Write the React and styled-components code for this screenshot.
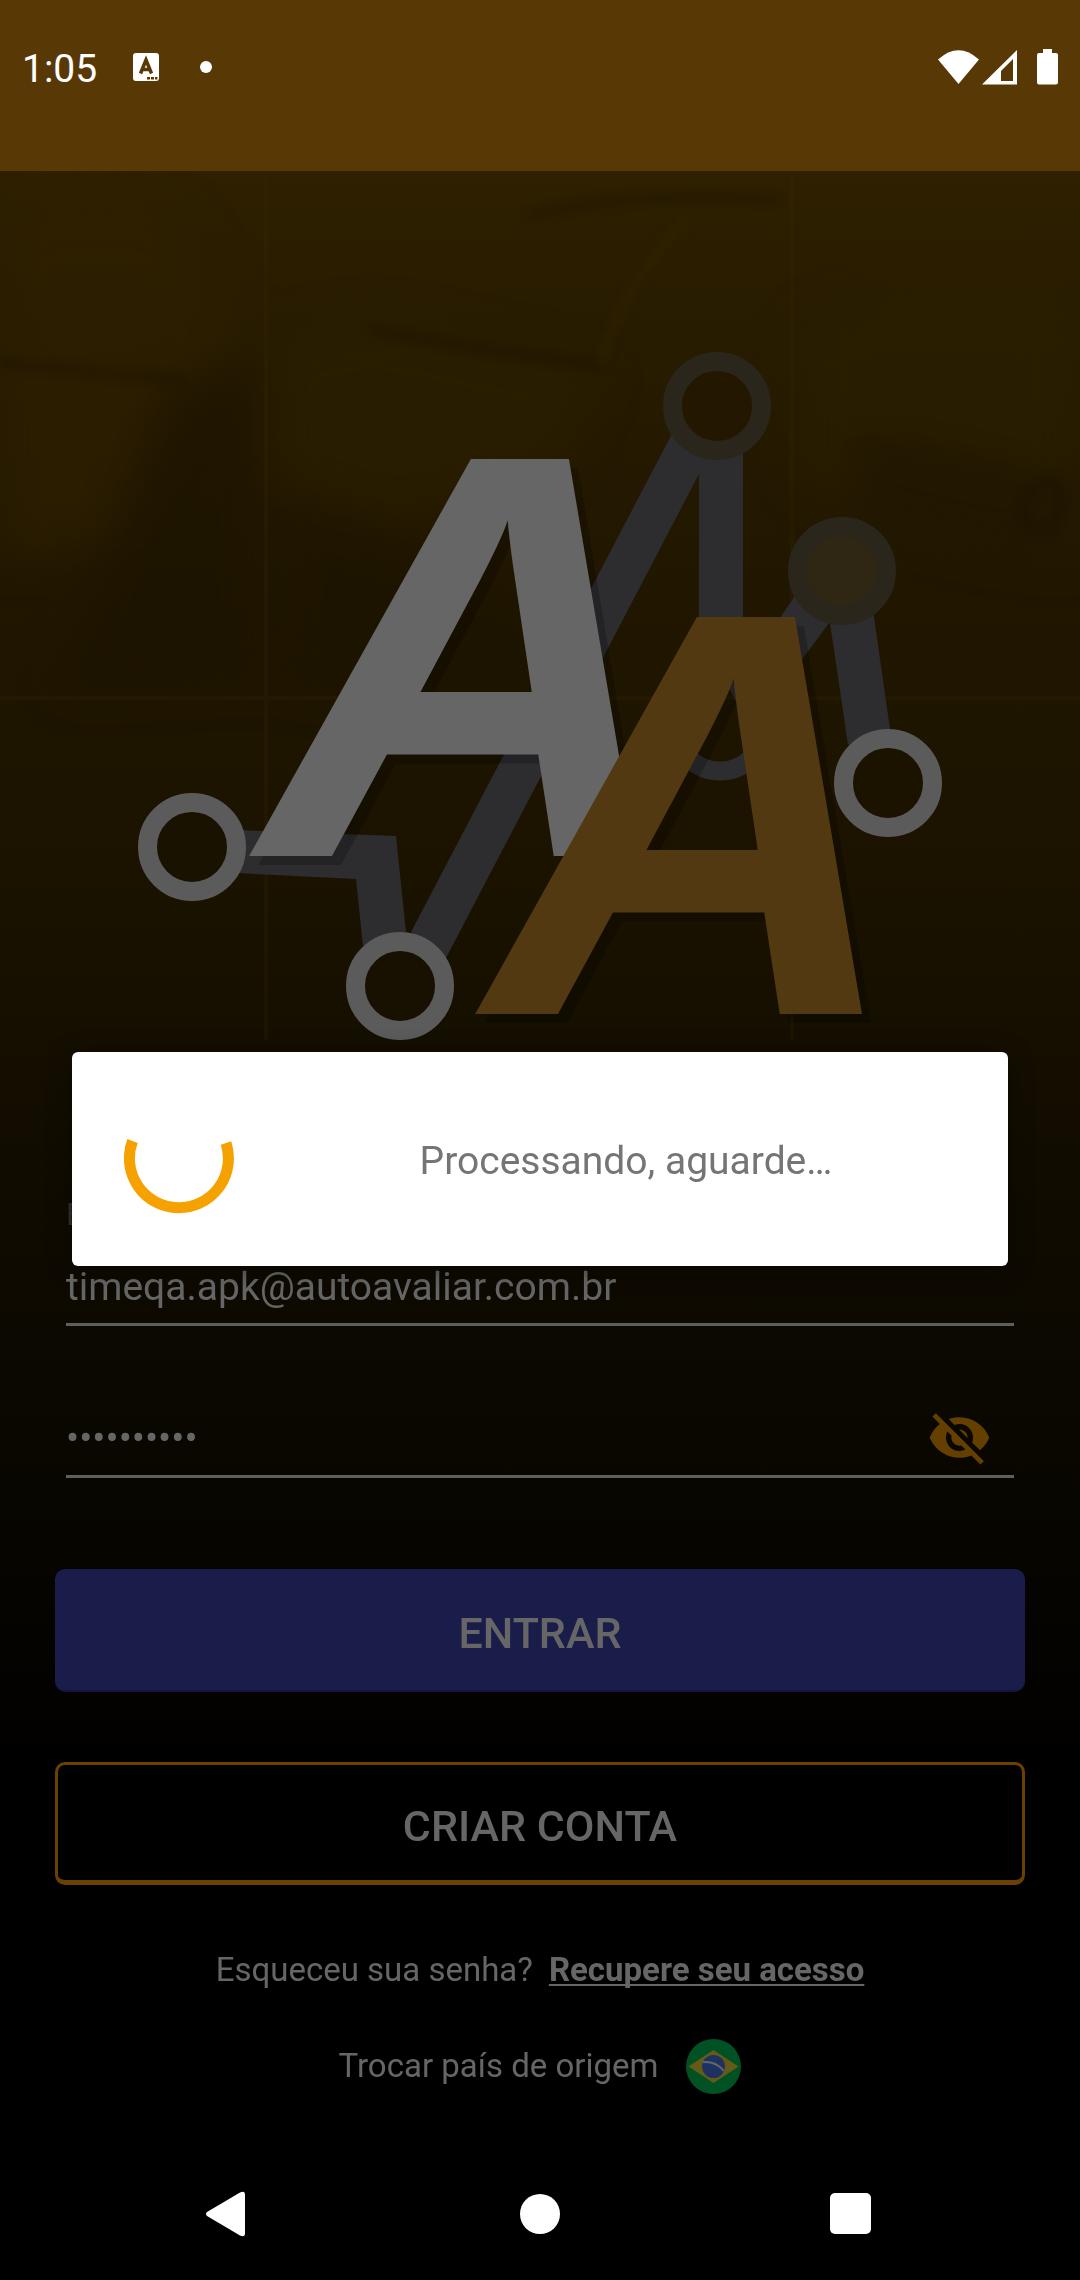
import React from "react";
import styled, { createGlobalStyle } from "styled-components";

const Global = createGlobalStyle`
  *, *::before, *::after { box-sizing: border-box; }
  body { margin: 0; background: #000; font-family: Roboto, "Liberation Sans", sans-serif; color: #666; }
`;

const Screen = styled.div`
  position: relative;
  min-height: 100vh;
  display: flex;
  flex-direction: column;
  background: #000;
`;

const StatusBar = styled.header`
  height: 171px;
  padding: 32px 21px 0 22px;
  display: flex;
  align-items: flex-start;
  justify-content: space-between;
  background: #583804;
  color: #fff;
`;

const StatusGroup = styled.div`
  height: 70px;
  display: flex;
  align-items: center;
  gap: ${(p) => p.$gap}px;
`;

const Clock = styled.time`
  padding-top: 4px;
  font-size: 39px;
  line-height: 48px;
`;

const Main = styled.main`
  position: relative;
  flex: 1;
  display: flex;
  flex-direction: column;
  isolation: isolate;
`;

const Backdrop = styled.div`
  position: absolute;
  z-index: -1;
  inset: 0 0 auto;
  height: 1574px;
  background: linear-gradient(#2e2000 0, #281c00 160px, #211700 420px, #1b1300 700px, #120d00 950px, #0b0800 1220px, #040300 1480px, #020100 1573px);
  svg { display: block; width: 100%; height: 100%; }
`;

const Logo = styled.svg`
  display: block;
  width: 100%;
  height: 900px;
`;

const LogoLetter = styled.text`
  font-family: "Liberation Sans", sans-serif;
  font-size: 577px;
  font-weight: 700;
  font-style: italic;
  filter: drop-shadow(9px 9px 0 rgba(0, 0, 0, 0.22));
`;

const Form = styled.form`
  display: flex;
  flex-direction: column;
  padding: 124px 55px 0;
`;

const Field = styled.div`
  display: flex;
  flex-direction: column;
  margin: 0 11px;
  border-bottom: 3px solid #5e5e5e;
  height: ${(p) => p.$height}px;
`;

const Label = styled.label`
  font-size: 32px;
  line-height: 38px;
  color: #333;
`;

const HiddenLabel = styled.label`
  position: absolute;
  width: 1px;
  height: 1px;
  overflow: hidden;
  clip-path: inset(50%);
`;

const FieldRow = styled.div`
  flex: 1;
  display: flex;
  align-items: center;
  padding: ${(p) => p.$top}px ${(p) => p.$end || 0}px 0 0;
`;

const TextInput = styled.input`
  flex: 1;
  min-width: 0;
  height: 60px;
  padding: 0;
  border: 0;
  outline: 0;
  background: transparent;
  color: #666;
  font: 400 39px/60px Roboto, "Liberation Sans", sans-serif;
`;

const IconButton = styled.button`
  display: flex;
  padding: 0;
  border: 0;
  background: transparent;
  color: ${(p) => p.$color || "#fff"};
`;

const ActionButton = styled.button`
  height: 123px;
  margin-top: ${(p) => p.$top}px;
  padding: 6px 0 0;
  border: ${(p) => (p.$outlined ? "3px solid #6a4100" : "0 solid #13153a")};
  border-bottom-width: ${(p) => (p.$outlined ? 5 : 2)}px;
  border-radius: 10px;
  background: ${(p) => (p.$outlined ? "#000" : "#1a1d4a")};
  color: #666;
  font: 500 43px/50px Roboto, "Liberation Sans", sans-serif;
`;

const LinkRow = styled.p`
  margin: ${(p) => p.$top}px 0 0;
  height: 56px;
  display: flex;
  align-items: center;
  justify-content: center;
  gap: ${(p) => p.$gap}px;
  font-size: 33px;
  line-height: 40px;
`;

const Link = styled.a`
  color: #666;
  font-weight: 700;
  text-underline-offset: 3px;
  text-decoration: underline;
  text-decoration-thickness: 2px;
  text-decoration-skip-ink: none;
`;

const NavBar = styled.nav`
  height: 132px;
  padding: 0 204px;
  display: flex;
  align-items: center;
  justify-content: space-between;
  background: #000;
`;

const Scrim = styled.div`
  position: absolute;
  inset: 170px 0 132px;
  display: flex;
  align-items: center;
  justify-content: center;
  padding: 0 72px;
`;

const Dialog = styled.div`
  width: 100%;
  height: 214px;
  padding: 0 0 0 52px;
  display: flex;
  align-items: center;
  border-radius: 6px;
  background: #fff;
  box-shadow: 0 4px 24px rgba(0, 0, 0, 0.4);
`;

const Message = styled.p`
  flex: 1;
  margin: 0 0 0 10px;
  padding-top: 4px;
  text-align: center;
  color: #757575;
  font-size: 39px;
  line-height: 48px;
`;

function CarPhoto() {
  return (
    <svg viewBox="0 171 1080 1574" preserveAspectRatio="none" aria-hidden="true">
      <defs>
        <filter id="soft" x="-30%" y="-30%" width="160%" height="160%" colorInterpolationFilters="sRGB"><feGaussianBlur stdDeviation="22" /></filter>
        <filter id="fine" colorInterpolationFilters="sRGB"><feGaussianBlur stdDeviation="5" /></filter>
      </defs>
      <g filter="url(#soft)">
        <path d="M0 230Q80 180 180 220L240 330 150 470 110 540 0 560Z" fill="#2e2000" opacity=".6" />
        <path d="M270 350Q350 310 420 330L600 370 560 470 400 520 270 480Z" fill="#2b1f00" opacity=".6" />
        <path d="M800 330Q930 270 1080 300L1080 560Q900 540 800 480Z" fill="#2b1f00" opacity=".6" />
        <path d="M160 390L260 350 260 680 60 690Z" fill="#1a1200" opacity=".5" />
        <path d="M280 500L400 540 560 600 540 690 280 690Z" fill="#1a1200" opacity=".4" />
        <path d="M850 430L960 450 1080 480 1060 560 860 520Z" fill="#1a1200" opacity=".4" />
      </g>
      <g filter="url(#fine)" fill="none" stroke="#171000" strokeWidth="7" opacity=".4">
        <path d="M0 363L180 380" />
        <path d="M370 330Q480 350 600 365" />
        <path d="M530 215Q640 190 780 200" />
        <path d="M1025 500Q1060 460 1060 505Q1050 550 1025 520Z" />
      </g>
      <path d="M600 365Q620 290 690 215" fill="none" stroke="#342500" strokeWidth="8" opacity=".5" filter="url(#fine)" />
      <path d="M266 171V1040M792 171V1040M0 698H1080" fill="none" stroke="#3a2800" strokeWidth="4" opacity=".22" />
    </svg>
  );
}

function BrandLogo() {
  return (
    <Logo viewBox="0 171 1080 900" role="img" aria-label="Auto Avaliar">
      <g fill="#2d2c2f">
        <path d="M236 830L396 836 406 932 363 946 356 879 236 873Z" />
        <path d="M674 430L728 440 699 474 446 958 411 932Z" />
        <path d="M699 450H743V690H699Z" />
        <path d="M795 596L829 623 750 730 730 690Z" />
        <path d="M829 616L873 610 890 729 848 745Z" />
      </g>
      <path d="M676 727A44 44 0 1 0 764 727" fill="none" stroke="#2d2c2f" strokeWidth="19" />
      <g fill="none" strokeWidth="19">
        <circle cx="717" cy="406" r="44.500" stroke="#2b261b" fill="#231700" />
        <circle cx="842" cy="571" r="44.500" stroke="#2b261b" fill="#2f2614" />
        <circle cx="192" cy="847" r="44.500" stroke="#5b5b5b" fill="#1a1200" />
        <circle cx="400" cy="986" r="44.500" stroke="#5b5b5b" fill="#181000" />
        <circle cx="888" cy="783" r="44.500" stroke="#5b5b5b" fill="#1b1200" />
      </g>
      <LogoLetter x="261" y="856" fill="#666">A</LogoLetter>
      <LogoLetter x="487" y="1014" fill="#533912">A</LogoLetter>
    </Logo>
  );
}

const NotificationIcon = () => (
  <svg width="26" height="28" viewBox="0 0 26 28" aria-hidden="true">
    <rect width="26" height="28" rx="3" fill="#fff" />
    <path d="M7.500 20.500L13 7 18.500 20.500M10 16.500H16" fill="none" stroke="#583804" strokeWidth="3.500" />
    <path d="M14 24h3v2.500h-3zM18 24h3v2.500h-3zM22 24h2.500v2.500h-2.500z" fill="#583804" />
  </svg>
);

const Dot = styled.span`
  width: 12px;
  height: 12px;
  border-radius: 50%;
  background: #fff;
`;

const SignalIcons = () => (
  <svg width="122" height="36" viewBox="937 49 122 36" fill="#fff" role="img" aria-label="Wi-Fi, sinal e bateria">
    <path d="M938 59.500Q958.500 41 979 59.500L958.500 84Z" />
    <path fillRule="evenodd" d="M982 84.500L1017 50V84.500ZM1001 81H1013V59L1001 71Z" />
    <path d="M1043 49H1052V53H1056Q1058 53 1058 55V82.500Q1058 84.500 1056 84.500H1039Q1037 84.500 1037 82.500V55Q1037 53 1039 53H1043Z" />
  </svg>
);

const EyeOff = () => (
  <svg width="65" height="65" viewBox="0 0 24 24" fill="currentColor" aria-hidden="true">
    <path d="M12 7c2.760 0 5 2.240 5 5 0 .650-.130 1.260-.360 1.830l2.920 2.920c1.510-1.260 2.700-2.890 3.430-4.750-1.730-4.390-6-7.500-11-7.500-1.400 0-2.740.250-3.980.700l2.160 2.160C10.740 7.130 11.350 7 12 7zM2 4.270l2.280 2.280.460.460C3.080 8.300 1.780 10.020 1 12c1.730 4.390 6 7.500 11 7.500 1.550 0 3.030-.300 4.380-.840l.420.420L19.730 22 21 20.730 3.270 3 2 4.270zM7.530 9.800l1.550 1.550c-.050.210-.080.430-.080.650 0 1.660 1.340 3 3 3 .220 0 .440-.030.650-.080l1.550 1.550c-.670.330-1.410.530-2.200.530-2.760 0-5-2.240-5-5 0-.790.200-1.530.530-2.200zm4.310-.780l3.150 3.150.020-.160c0-1.660-1.340-3-3-3l-.170.010z" />
  </svg>
);

const BrazilFlag = () => (
  <svg width="55" height="55" viewBox="0 0 55 55" role="img" aria-label="Brasil">
    <circle cx="27.500" cy="27.500" r="27.500" fill="#005225" />
    <path d="M2.500 27.500L27.500 11 52.500 27.500 27.500 44Z" fill="#665a16" />
    <circle cx="27.500" cy="27.500" r="11.500" fill="#1e3262" />
    <path d="M17 23Q30 22 38 32" fill="none" stroke="#666" strokeWidth="2" />
  </svg>
);

const Spinner = () => (
  <svg width="110" height="110" viewBox="0 0 110 110" role="progressbar" aria-label="Carregando">
    <path d="M8.500 37A49.500 49.500 0 1 0 102 39" fill="none" stroke="#f5a200" strokeWidth="11" />
  </svg>
);

export default function App() {
  return (
    <>
      <Global />
      <Screen>
        <StatusBar>
          <StatusGroup $gap={36}>
            <Clock>1:05</Clock>
            <StatusGroup $gap={41}>
              <NotificationIcon />
              <Dot />
            </StatusGroup>
          </StatusGroup>
          <StatusGroup $gap={0}>
            <SignalIcons />
          </StatusGroup>
        </StatusBar>
        <Main>
          <Backdrop><CarPhoto /></Backdrop>
          <BrandLogo />
          <Form onSubmit={(e) => e.preventDefault()}>
            <Field $height={131}>
              <Label htmlFor="email">E-mail</Label>
              <FieldRow $top={18}>
                <TextInput id="email" type="email" defaultValue="timeqa.apk@autoavaliar.com.br" />
              </FieldRow>
            </Field>
            <Field $height={152}>
              <HiddenLabel htmlFor="password">Senha</HiddenLabel>
              <FieldRow $top={74} $end={22}>
                <TextInput id="password" type="password" defaultValue="1234567890" />
                <IconButton type="button" $color="#643f00" aria-label="Mostrar senha"><EyeOff /></IconButton>
              </FieldRow>
            </Field>
            <ActionButton type="submit" $top={91}>ENTRAR</ActionButton>
            <ActionButton type="button" $top={70} $outlined>CRIAR CONTA</ActionButton>
          </Form>
          <LinkRow $top={57} $gap={16}>
            <span>Esqueceu sua senha?</span>
            <Link href="#recuperar">Recupere seu acesso</Link>
          </LinkRow>
          <LinkRow $top={40} $gap={28}>
            <span>Trocar país de origem</span>
            <BrazilFlag />
          </LinkRow>
        </Main>
        <NavBar>
          <IconButton type="button" aria-label="Voltar">
            <svg width="46" height="46" viewBox="0 0 46 46" fill="#fff"><path d="M3 21L36 1.500Q41 -1 41 4V42Q41 47 36 44.500L3 25Q1 23 3 21Z" /></svg>
          </IconButton>
          <IconButton type="button" aria-label="Início">
            <svg width="42" height="42" viewBox="0 0 42 42" fill="#fff"><circle cx="21" cy="21" r="20" /></svg>
          </IconButton>
          <IconButton type="button" aria-label="Recentes">
            <svg width="46" height="42" viewBox="0 0 46 42" fill="#fff"><rect width="41" height="41" rx="5" /></svg>
          </IconButton>
        </NavBar>
        <Scrim>
          <Dialog role="dialog" aria-modal="true" aria-label="Processando">
            <Spinner />
            <Message>Processando, aguarde…</Message>
          </Dialog>
        </Scrim>
      </Screen>
    </>
  );
}
